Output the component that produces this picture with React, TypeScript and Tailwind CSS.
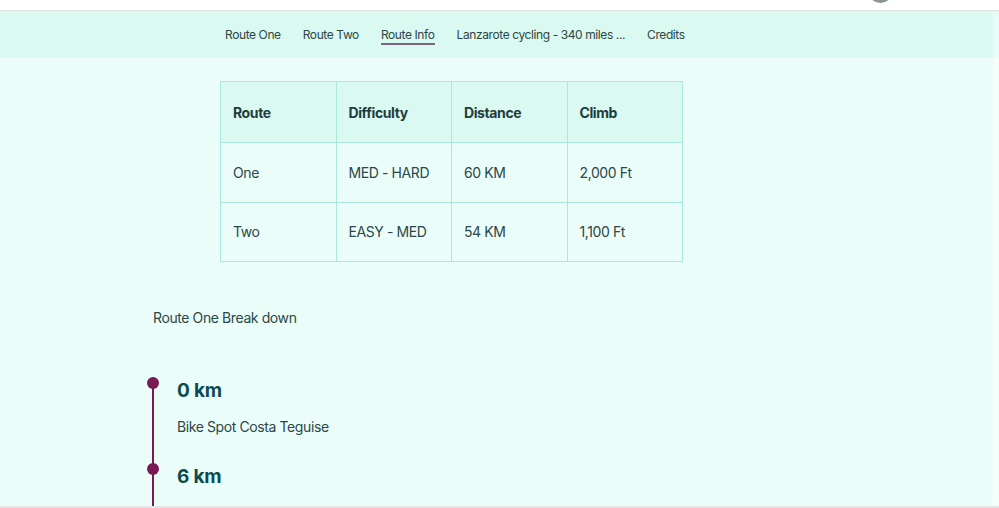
import React from 'react';

const navLinks = ['Route One', 'Route Two', 'Route Info', 'Lanzarote cycling - 340 miles ...', 'Credits'];

const rows = [
  { route: 'One', difficulty: 'MED - HARD', distance: '60 KM', climb: '2,000 Ft' },
  { route: 'Two', difficulty: 'EASY - MED', distance: '54 KM', climb: '1,100 Ft' },
];

const stops = [
  { km: '0 km', place: 'Bike Spot Costa Teguise' },
  { km: '6 km', place: '' },
];

export default function App() {
  return (
    <div
      className="relative h-[508px] w-[999px] overflow-hidden bg-[#ebfdf9] text-[#2b4747]"
      style={{ fontFamily: 'Inter, "Open Sans", sans-serif' }}
    >
      {/* top strip with partial avatar */}
      <div className="relative h-[11px] border-b border-[#dde3e2] bg-white">
        <div className="absolute left-[868px] top-[-22px] h-[25px] w-[25px] rounded-full bg-[#8a9694]" />
      </div>

      {/* nav */}
      <nav className="flex h-[47px] items-center bg-[#d9f9f1] pl-[225px] text-[12px] tracking-[-0.4px] text-[#2f4646]">
        <ul className="flex gap-[22px]">
          {navLinks.map((l) => (
            <li key={l}>
              <a
                href="#"
                className={
                  l === 'Route Info'
                    ? 'border-b-2 border-[#7d6680] pb-[1px]'
                    : ''
                }
              >
                {l}
              </a>
            </li>
          ))}
        </ul>
      </nav>

      <main className="pt-[23px] tracking-[-0.4px]">
        <table className="ml-[220px] w-[463px] table-fixed border-collapse text-[14px]">
          <thead>
            <tr className="h-[61px] bg-[#d9f9f1]">
              {['Route', 'Difficulty', 'Distance', 'Climb'].map((h) => (
                <th key={h} className="border border-[#a9e9dd] px-[12px] text-left font-bold text-[#1f3d3d]">
                  {h}
                </th>
              ))}
            </tr>
          </thead>
          <tbody>
            {rows.map((r) => (
              <tr key={r.route} className="h-[59.5px]">
                <td className="border border-[#a9e9dd] px-[12px]">{r.route}</td>
                <td className="border border-[#a9e9dd] px-[12px]">{r.difficulty}</td>
                <td className="border border-[#a9e9dd] px-[12px]">{r.distance}</td>
                <td className="border border-[#a9e9dd] px-[12px]">{r.climb}</td>
              </tr>
            ))}
          </tbody>
        </table>

        <p className="ml-[153px] mt-[45px] text-[14px]">Route One Break down</p>

        <ol className="ml-[152px] mt-[54px] border-l-2 border-[#7a1a55] pb-[40px]">
          {stops.map((s) => (
            <li key={s.km} className="relative pl-[23px]">
              <span className="absolute left-[-7px] top-[-5px] h-[12px] w-[12px] rounded-full bg-[#7a1a55]" />
              <h3 className="text-[19px] font-bold leading-[18px] tracking-[-0.2px] text-[#0d4a4f]">{s.km}</h3>
              {s.place && <p className="mt-[16px] h-[52px] text-[14px]">{s.place}</p>}
            </li>
          ))}
        </ol>
      </main>

      {/* scrollbar edges */}
      <div className="absolute right-0 top-[12px] h-[496px] w-[6px] bg-white/40" />
      <div className="absolute bottom-0 left-0 h-[2px] w-full bg-[#e3e6e5]" />
    </div>
  );
}
